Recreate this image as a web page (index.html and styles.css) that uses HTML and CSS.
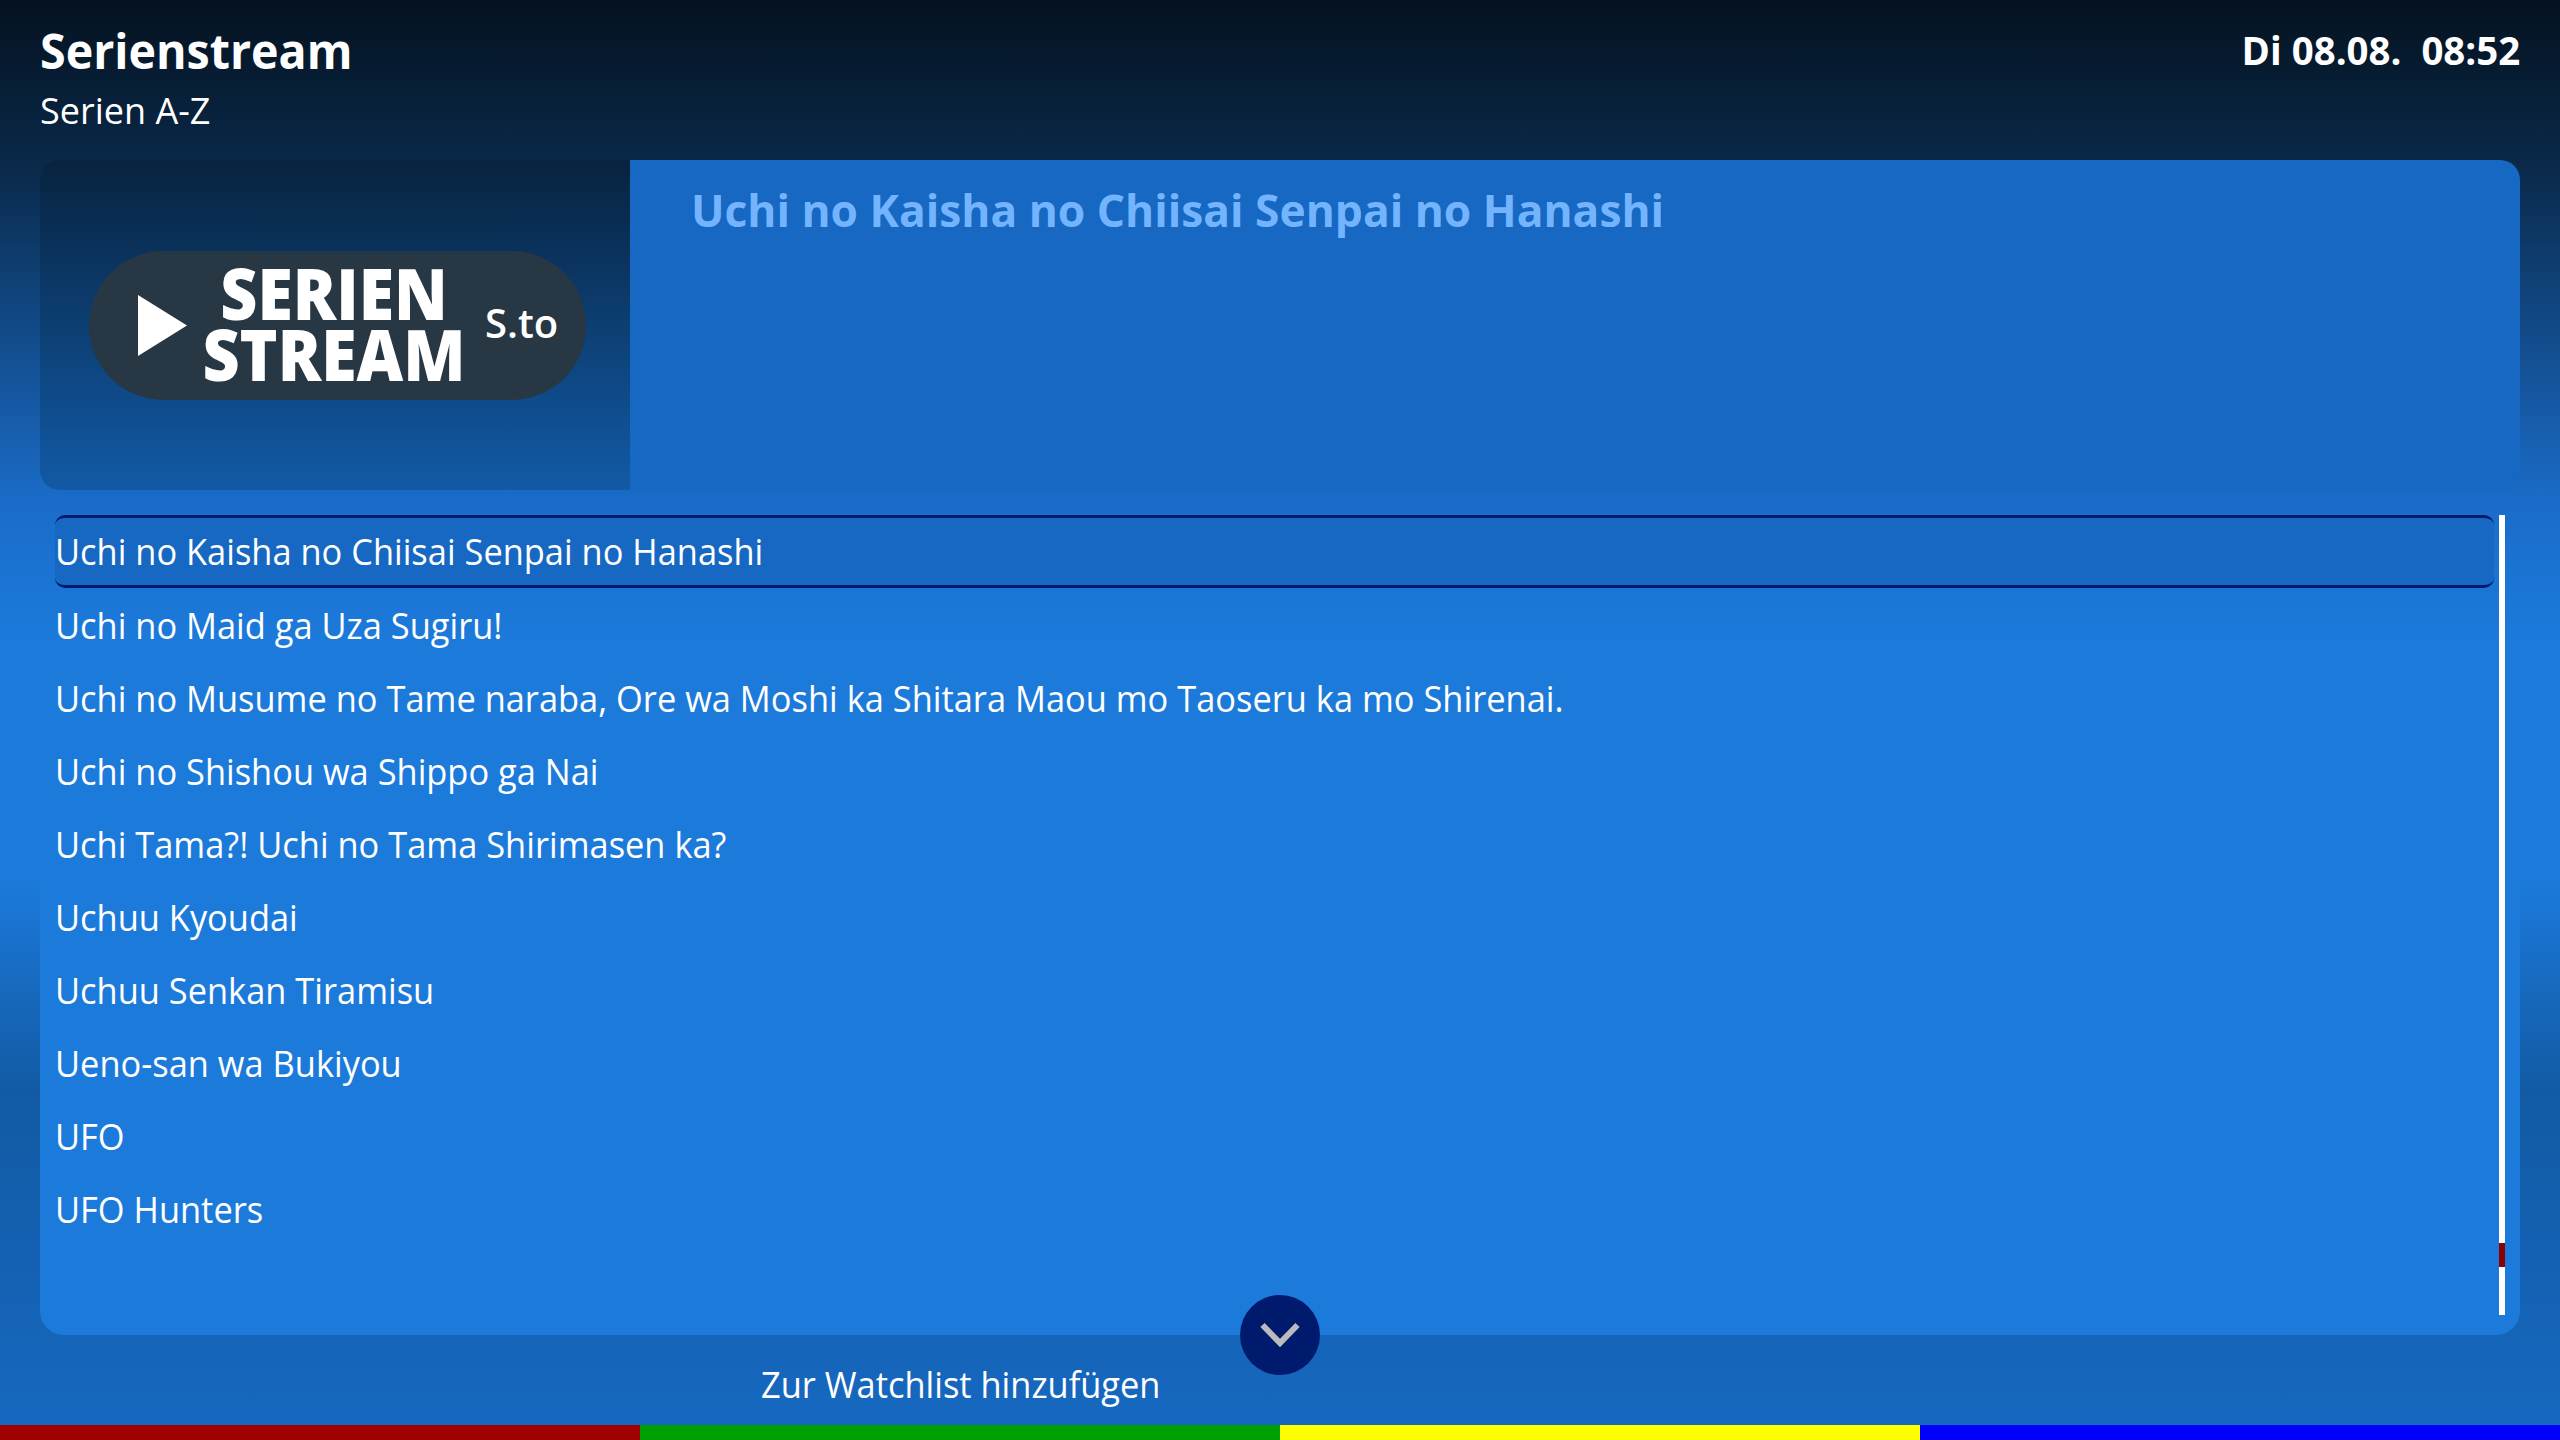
FILE: index.html
```html
<!DOCTYPE html>
<html lang="de">
<head>
  <meta charset="UTF-8">
  <title>Serienstream</title>
  <link rel="stylesheet" href="styles.css">
</head>
<body>
  <header class="header">
    <div>
      <div class="header-title">Serienstream</div>
      <div class="header-sub">Serien A-Z</div>
    </div>
    <div class="clock">Di 08.08.&nbsp; 08:52</div>
  </header>

  <section class="info">
    <div class="logo-box">
      <div class="logo">
        <svg class="logo-play" viewBox="0 0 49 61"><path d="M0 0L49 30.5L0 61Z"/></svg>
        <div class="logo-name">
          <div class="logo-line">SERIEN</div>
          <div class="logo-line">STREAM</div>
        </div>
        <div class="logo-domain">S.to</div>
      </div>
    </div>
    <div class="info-body">
      <div class="info-title">Uchi no Kaisha no Chiisai Senpai no Hanashi</div>
    </div>
  </section>

  <section class="list-panel">
    <div class="list">
      <div class="row selected"><span class="narrow">Uchi no Kaisha no Chiisai Senpai no Hanashi</span></div>
      <div class="row"><span class="narrow">Uchi no Maid ga Uza Sugiru!</span></div>
      <div class="row"><span class="narrow">Uchi no Musume no Tame naraba, Ore wa Moshi ka Shitara Maou mo Taoseru ka mo Shirenai.</span></div>
      <div class="row"><span class="narrow">Uchi no Shishou wa Shippo ga Nai</span></div>
      <div class="row"><span class="narrow">Uchi Tama?! Uchi no Tama Shirimasen ka?</span></div>
      <div class="row"><span class="narrow">Uchuu Kyoudai</span></div>
      <div class="row"><span class="narrow">Uchuu Senkan Tiramisu</span></div>
      <div class="row"><span class="narrow">Ueno-san wa Bukiyou</span></div>
      <div class="row"><span class="narrow">UFO</span></div>
      <div class="row"><span class="narrow">UFO Hunters</span></div>
    </div>
    <div class="scrollbar"><div class="scroll-thumb"></div></div>
    <div class="more">
      <svg viewBox="0 0 40 26" class="more-icon"><path d="M2.5 3L20 21L37.5 3" /></svg>
    </div>
  </section>

  <div class="hints">
    <div class="hint"></div>
    <div class="hint"><span class="narrow">Zur Watchlist hinzufügen</span></div>
    <div class="hint"></div>
    <div class="hint"></div>
  </div>

  <div class="color-keys">
    <div class="key red"></div>
    <div class="key green"></div>
    <div class="key yellow"></div>
    <div class="key blue"></div>
  </div>
</body>
</html>
```

FILE: styles.css
```css
* {
  margin: 0;
  padding: 0;
  box-sizing: border-box;
}

body {
  width: 2560px;
  height: 1440px;
  overflow: hidden;
  font-family: "Open Sans", sans-serif;
  color: #fff;
  background: linear-gradient(to bottom, #04121f 0, #0a2848 160px, #1a6cc8 500px, #1c7adb 640px, #1c7adb 880px, #125aa4 1090px, #1668c0 1425px);
  display: flex;
  flex-direction: column;
}

/* the reference font runs narrower than Open Sans */
.narrow {
  display: inline-block;
  transform: scaleX(0.93);
  transform-origin: left center;
}

.header {
  height: 160px;
  padding: 23px 40px 0;
  display: flex;
  justify-content: space-between;
  align-items: flex-start;
}

.header-title {
  font-size: 49px;
  font-weight: 700;
  line-height: 54px;
  transform: scaleX(0.95);
  transform-origin: left center;
}

.header-sub {
  font-size: 36px;
  line-height: 50px;
  margin-top: 9px;
}

.clock {
  font-size: 40px;
  font-weight: 700;
  line-height: 54px;
  transform: scaleX(0.96);
  transform-origin: right center;
}

.info {
  height: 330px;
  margin: 0 40px;
  display: flex;
}

.logo-box {
  width: 590px;
  border-radius: 20px 0 0 20px;
  display: flex;
  align-items: center;
  padding-left: 49px;
  background: linear-gradient(to bottom, #07233f, #125aa6);
}

.logo {
  width: 497px;
  height: 149px;
  border-radius: 75px;
  background: #283744;
  display: flex;
  align-items: center;
}

.logo-play {
  width: 49px;
  height: 61px;
  margin-left: 49px;
  fill: #fff;
}

.logo-name {
  width: 290px;
  margin-left: 2px;
  margin-bottom: 3px;
  font-size: 70px;
  font-weight: 800;
  line-height: 61px;
  text-align: center;
}

.logo-line {
  transform: scaleX(0.92);
}

.logo-domain {
  font-size: 40px;
  font-weight: 600;
  margin-left: 6px;
  margin-bottom: 6px;
}

.info-body {
  flex: 1;
  background: #1668c2;
  border-radius: 0 20px 20px 0;
  padding: 19px 61px;
}

.info-title {
  font-size: 45px;
  font-weight: 700;
  line-height: 62px;
  color: #74b4ff;
  transform: scaleX(0.985);
  transform-origin: left center;
}

.list-panel {
  position: relative;
  height: 845px;
  margin: 0 40px;
  padding: 25px 15px 0;
  background: linear-gradient(to bottom, transparent 390px, #1c7adb 390px);
  border-radius: 0 0 24px 24px;
}

.row {
  height: 73px;
  width: 2439px;
  font-size: 37px;
  line-height: 73px;
  white-space: nowrap;
}

.row.selected {
  background: #1668c2;
  border-top: 3px solid #001a6e;
  border-bottom: 3px solid #001a6e;
  border-radius: 10px;
  line-height: 66px;
}

.scrollbar {
  position: absolute;
  left: 2459px;
  top: 25px;
  width: 6px;
  height: 800px;
  background: #fff;
}

.scroll-thumb {
  position: absolute;
  left: 0;
  top: 728px;
  width: 6px;
  height: 24px;
  background: #8b0000;
}

.more {
  position: absolute;
  left: 1200px;
  bottom: -40px;
  width: 80px;
  height: 80px;
  border-radius: 50%;
  background: #001a6e;
  display: flex;
  align-items: center;
  justify-content: center;
}

.more-icon {
  width: 40px;
  height: 26px;
  fill: none;
  stroke: #bbb;
  stroke-width: 6;
}

.hints {
  flex: 1;
  display: grid;
  grid-template-columns: repeat(4, 640px);
}

.hint {
  font-size: 37px;
  padding: 23px 0 0 121px;
}

.color-keys {
  height: 15px;
  display: grid;
  grid-template-columns: repeat(4, 640px);
}

.red { background: #a00000; }
.green { background: #00a000; }
.yellow { background: #ffff00; }
.blue { background: #0000ff; }
```
